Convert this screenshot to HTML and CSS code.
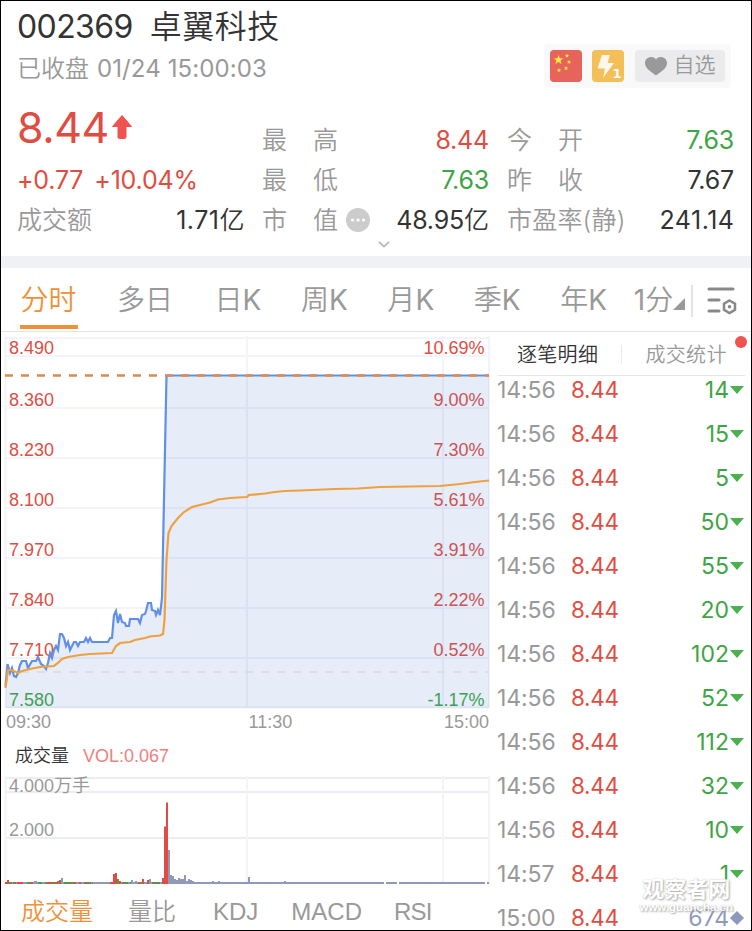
FILE: index.html
```html
<!DOCTYPE html>
<html lang="zh-CN">
<head>
    <meta charset="UTF-8">
    <meta name="viewport" content="width=device-width, initial-scale=1.0">
    <title>卓翼科技 002369</title>
    <link rel="stylesheet" href="styles.css">
</head>
<body>
    <div class="screen">
        <header class="quote">
            <div class="title"><span class="code">002369</span><span class="name">卓翼科技</span></div>
            <div class="status-row">
                <div class="status"><span>已收盘</span><span class="clock">01/24 15:00:03</span></div>
                <div class="actions">
                    <svg class="badge" viewBox="0 0 32 32">
                        <rect width="32" height="32" rx="4" fill="#e6645b"/>
                        <g fill="#fdec3c">
                            <path d="M8.500 5l1.400 3.200 3.300.2-2.600 2.100.9 3.400-3-1.900-3 1.900.9-3.400L4 8.400l3.300-.2z"/>
                            <path d="M17 3.500l.6 1.500 1.600.1-1.200 1 .4 1.500-1.400-.8-1.400.8.4-1.500-1.200-1 1.600-.1z"/>
                            <path d="M19 9.700l.6 1.500 1.600.1-1.200 1 .4 1.500-1.400-.8-1.400.8.4-1.500-1.200-1 1.600-.1z"/>
                            <path d="M16 16l.6 1.500 1.600.1-1.200 1 .4 1.500-1.400-.8-1.400.8.4-1.500-1.200-1 1.600-.1z"/>
                            <path d="M9 18l.6 1.500 1.600.1-1.200 1 .4 1.500-1.400-.8-1.400.8.4-1.500-1.200-1 1.600-.1z"/>
                        </g>
                    </svg>
                    <svg class="badge level-badge" viewBox="0 0 32 32">
                        <rect width="32" height="32" rx="4" fill="#f4bf59"/>
                        <path d="M10 5h8l-2.500 8H22L11 28l2-9.500H5.500z" fill="#fff8ea"/>
                        <text class="level" x="20.500" y="28">1</text>
                    </svg>
                    <div class="fav">
                        <svg width="22" height="19" viewBox="0 0 22 19"><path d="M11 18.500C8 16 0 12 0 6 0 0 8-2 11 2.500 14-2 22 0 22 6c0 6-8 10-11 12.500z" fill="#999"/></svg>
                        <span>自选</span>
                    </div>
                </div>
            </div>
            <div class="figures">
                <div class="col">
                    <div class="price"><span>8.44</span><svg width="20" height="24" viewBox="0 0 20 24"><path d="M10 .5L19.500 11.500H14V22q0 1.500-1.500 1.500h-5Q6 23.500 6 22V11.500H.5z" fill="#ef5350" stroke="#ef5350" stroke-linejoin="round"/></svg></div>
                    <div class="row change up"><span>+0.77</span><span>+10.04%</span></div>
                    <div class="row"><label>成交额</label><span class="loose">1.71<small>亿</small></span></div>
                </div>
                <div class="col">
                    <div class="row"><label>最<i></i>高</label><span class="up">8.44</span></div>
                    <div class="row"><label>最<i></i>低</label><span class="down">7.63</span></div>
                    <div class="row"><label>市<i></i>值<svg class="more" viewBox="0 0 24 24"><circle cx="12" cy="12" r="12" fill="#ccc"/><g fill="#fff"><circle cx="6.500" cy="12" r="1.600"/><circle cx="12" cy="12" r="1.600"/><circle cx="17.500" cy="12" r="1.600"/></g></svg></label><span>48.95<small>亿</small></span></div>
                </div>
                <div class="col">
                    <div class="row"><label>今<i></i>开</label><span class="down">7.63</span></div>
                    <div class="row"><label>昨<i></i>收</label><span>7.67</span></div>
                    <div class="row"><label class="pe">市盈率(静)</label><span class="loose">241.14</span></div>
                </div>
            </div>
            <svg class="expand" width="12" height="7" viewBox="0 0 12 7"><path d="M1 1l5 4.500L11 1" fill="none" stroke="#bbb" stroke-width="1.800"/></svg>
        </header>

        <nav class="periods">
            <a class="active">分时</a>
            <a class="days">多日</a>
            <a>日<em>K</em></a>
            <a>周<em>K</em></a>
            <a>月<em>K</em></a>
            <a>季<em>K</em></a>
            <a class="year">年<em>K</em></a>
            <a class="minute"><em>1</em>分<svg width="12" height="12" viewBox="0 0 12 12"><path d="M12 0v12H0z" fill="#999"/></svg></a>
            <div class="settings">
                <svg width="30" height="28" viewBox="0 0 30 28" fill="none" stroke="#888" stroke-width="3" stroke-linecap="round">
                    <path d="M2 2h24M2 13h10M2 24h10"/>
                    <path d="M22.500 14l5.500 3.200v6.200l-5.500 3.200-5.500-3.200v-6.200z" stroke-width="2.500" transform="translate(0 -.5)"/>
                    <circle cx="22.500" cy="19.800" r="1.800" fill="#888" stroke="none"/>
                </svg>
            </div>
        </nav>

        <main class="content">
            <section class="charts">
                <!-- intraday price, y grows from 8.49 down to 7.58 -->
                <svg class="price-chart" width="489" height="404" viewBox="1 332 489 404">
                    <g class="grid">
                        <path d="M5 338H489M5 356H489M5 408H489M5 458H489M5 508H489M5 558H489M5 608H489M5 658H489M5 707.500H489"/>
                        <path d="M5.500 336V708M247 336V708M443 336V708M489 336V708"/>
                    </g>
                    <g class="labels up">
                        <text x="9" y="354">8.490</text>
                        <text x="9" y="406">8.360</text>
                        <text x="9" y="456">8.230</text>
                        <text x="9" y="506">8.100</text>
                        <text x="9" y="556">7.970</text>
                        <text x="9" y="606">7.840</text>
                        <text x="9" y="656">7.710</text>
                        <text x="9" y="706" class="down">7.580</text>
                    </g>
                    <g class="labels end up">
                        <text x="484.500" y="354">10.69%</text>
                        <text x="484.500" y="406">9.00%</text>
                        <text x="484.500" y="456">7.30%</text>
                        <text x="484.500" y="506">5.61%</text>
                        <text x="484.500" y="556">3.91%</text>
                        <text x="484.500" y="606">2.22%</text>
                        <text x="484.500" y="656">0.52%</text>
                        <text x="484.500" y="706" class="down">-1.17%</text>
                    </g>
                    <path class="area" d="M5.500 686L7.500 664 10 673 12 668 14 676 16 677 18 673 20 665 22 661 26 661 28 668 32 661 36 661 38 657 41 664 44 666 46 669 48 663 50 653 52 658 54 650 56 646 58 650 60 634 62 634 64 638 66 646 68 642 70 650 74 642 76 642 78 646 80 642 84 642 86 638 88 642 90 638 92 642 108 642 110 638 112 638 114 615 116 611 118 623 120 614 122 622 125 623 126 626 129 626 130 619 138 619 140 623 142 615 145 614 146 611 148 603 151 603 152 610 155 611 156 615 158 610 160 615 162 598 166.500 375.500H489V708H5.500z"/>
                    <path class="prev-close" d="M21 672H489"/>
                    <path class="line" d="M5.500 686L7.500 664 10 673 12 668 14 676 16 677 18 673 20 665 22 661 26 661 28 668 32 661 36 661 38 657 41 664 44 666 46 669 48 663 50 653 52 658 54 650 56 646 58 650 60 634 62 634 64 638 66 646 68 642 70 650 74 642 76 642 78 646 80 642 84 642 86 638 88 642 90 638 92 642 108 642 110 638 112 638 114 615 116 611 118 623 120 614 122 622 125 623 126 626 129 626 130 619 138 619 140 623 142 615 145 614 146 611 148 603 151 603 152 610 155 611 156 615 158 610 160 615 162 598 166.500 375.500H489"/>
                    <path class="average" d="M5.500 688L8 670 10 670 14 671 18 673 22 671 30 669 40 667 54 666 58 663 62 659 68 657 80 655 90 654 112 653 116 646 120 643 130 642 135 640 145 638 150 636.500 160 635.500 163 634 164.500 620 166.500 560 168.500 533 171.500 526 178 518 184 512 192 507 200 505 210 502.500 218 499.500 230 498 247 497 249 495 265 493.500 275 492 285 491 300 490.500 335 489 358 488.500 380 487 440 486 460 484 475 482 489 480.500"/>
                    <path class="limit" d="M5 375.500H489"/>
                    <g class="labels axis">
                        <text x="6" y="728">09:30</text>
                        <text x="248.500" y="728">11:30</text>
                        <text x="444" y="728">15:00</text>
                    </g>
                </svg>
                <div class="vol-title"><span>成交量</span><span class="vol">VOL:0.067</span></div>
                <svg class="vol-chart" width="489" height="112" viewBox="1 776 489 112">
                    <g class="grid strong">
                        <path d="M5 778H489M5 792H489M5 838H489"/>
                    </g>
                    <g class="grid">
                        <path d="M5.500 776V884M247 776V884M443 776V884M489 776V884"/>
                    </g>
                    <g class="labels axis">
                        <text x="9" y="792">4.000万手</text>
                        <text x="9" y="836">2.000</text>
                    </g>
                    <path class="bars flat" d="M5 883H384M386 883H397M399 883H485M487 883H489M34 882H37M62 884V878M132 884V880M136 884V881M150 884V879M169 884V850M171 884V875M173 884V876M175 884V879M177 884V880M179 884V878M181 884V879M183 884V879M185 884V875M187 884V881M189 884V879M191 884V880M193 884V881M213 884V881M219 884V881M249 884V877M285 884V881"/>
                    <path class="bars rise" d="M5 883H9M13 883H15M17 883H23M30 883H33M47 883H52M54 883H57M69 883H71M74 883H76M79 883H81M86 883H88M90 883H91M110 883H114M122 883H124M138 883H140M154 883H156M8 884V880M60 884V880M114 884V874M116 884V873M120 884V881M143 884V879M148 884V880M163 884V878M165 884V826.500M167 884V802.500"/>
                    <path class="bars fall" d="M9 883H12M15 883H16M27 883H30M38 883H42M45 883H47M52 883H54M64 883H69M71 883H74M84 883H86M88 883H90M92 883H93M58 884V881M118 884V879M124 883H128M130 883H131M140 883H142M152 883H154M156 883H160"/>
                </svg>
                <nav class="indicators">
                    <a class="active">成交量</a>
                    <a>量比</a>
                    <a class="kdj">KDJ</a>
                    <a class="macd">MACD</a>
                    <a class="rsi">RSI</a>
                </nav>
            </section>

            <section class="ticks">
                <div class="tick-tabs">
                    <a class="active">逐笔明细</a>
                    <a>成交统计<i class="dot"></i></a>
                </div>
                <ul class="tick-list">
                    <li><time>14:56</time><b>8.44</b><span>14</span><i class="tri"></i></li>
                    <li><time>14:56</time><b>8.44</b><span>15</span><i class="tri"></i></li>
                    <li><time>14:56</time><b>8.44</b><span>5</span><i class="tri"></i></li>
                    <li><time>14:56</time><b>8.44</b><span>50</span><i class="tri"></i></li>
                    <li><time>14:56</time><b>8.44</b><span>55</span><i class="tri"></i></li>
                    <li><time>14:56</time><b>8.44</b><span>20</span><i class="tri"></i></li>
                    <li><time>14:56</time><b>8.44</b><span>102</span><i class="tri"></i></li>
                    <li><time>14:56</time><b>8.44</b><span>52</span><i class="tri"></i></li>
                    <li><time>14:56</time><b>8.44</b><span>112</span><i class="tri"></i></li>
                    <li><time>14:56</time><b>8.44</b><span>32</span><i class="tri"></i></li>
                    <li><time>14:56</time><b>8.44</b><span>10</span><i class="tri"></i></li>
                    <li><time>14:57</time><b>8.44</b><span>1</span><i class="tri"></i></li>
                    <li class="even"><time>15:00</time><b>8.44</b><span>674</span><i class="diamond"></i></li>
                </ul>
            </section>
        </main>
        <div class="watermark"><div class="wm-name">观察者网</div><div class="wm-url">www.guancha.cn</div></div>
    </div>
</body>
</html>
```
FILE: styles.css
```css
* {
    box-sizing: border-box;
}
body {
    margin: 0;
    font-family: Inter, "Noto Sans CJK SC", sans-serif;
    font-weight: 350;
    color: #333;
}
.screen {
    position: relative;
    width: 752px;
    height: 931px;
    border: 1px solid #000;
    background: #fff;
    overflow: hidden;
}
.up {
    color: #df4d42;
    fill: #df4d42;
}
.down {
    color: #3ea544;
    fill: #3ea544;
}
/* chinese stays a bit lighter than the digits */
.code, .clock, .price, .row span, .periods em {
    font-weight: 400;
    font-style: normal;
}
.row small {
    font-size: 25px;
    font-weight: 350;
    letter-spacing: 0;
}

/* header */
.quote {
    position: relative;
    height: 267px;
    padding: 1px 17px 0 16px;
    border-bottom: 12px solid #f0f1f4;
}
.title {
    display: flex;
    gap: 17px;
    height: 47px;
    line-height: 50px;
    font-size: 32px;
}
.code {
    letter-spacing: -0.6px;
}
.name {
    letter-spacing: 0.5px;
}
.status-row {
    display: flex;
    justify-content: space-between;
    height: 40px;
}
.status {
    display: flex;
    gap: 8px;
    line-height: 40px;
    font-size: 24px;
    color: #999;
}
.clock {
    letter-spacing: 0.1px;
}
.actions {
    display: flex;
    align-items: center;
    gap: 10px;
    height: 44px;
    margin: -5px 3px 0 0;
    padding: 0 6px;
    border-radius: 4px;
    background: #f9f9f9;
}
.badge {
    width: 32px;
    height: 32px;
}
.level-badge {
    margin-right: 1px;
}
.level {
    font: bold 13px "DejaVu Sans", sans-serif;
    fill: #fff;
}
.fav {
    display: flex;
    align-items: center;
    justify-content: center;
    gap: 7px;
    width: 90px;
    height: 32px;
    border-radius: 4px;
    background: #ebebed;
    font-size: 21px;
    line-height: 30px;
    color: #999;
}
.fav span {
    margin-top: -2px;
}
.figures {
    display: grid;
    grid-template-columns: 227px 227px 227px;
    justify-content: space-between;
    margin-top: 11px;
    padding-top: 20px;
}
.col {
    display: flex;
    flex-direction: column;
}
.row {
    display: flex;
    justify-content: space-between;
    height: 40px;
    line-height: 40px;
    font-size: 25px;
}
.row label {
    display: flex;
    align-items: center;
    margin-top: -1px;
    color: #999;
}
.row span {
    letter-spacing: -0.2px;
}
.row i {
    width: 26px;
}
.row .loose {
    letter-spacing: 0.5px;
    margin-right: -0.5px;
}
.pe {
    letter-spacing: 0.2px;
}
.change {
    justify-content: flex-start;
    gap: 11px;
}
.price {
    display: flex;
    align-items: center;
    gap: 3px;
    height: 40px;
    margin-top: -13px;
    margin-bottom: 13px;
    font-size: 43px;
    letter-spacing: -0.4px;
    color: #df4d42;
}
.more {
    width: 24px;
    height: 24px;
    margin-left: 8px;
}
.expand {
    position: absolute;
    left: 377px;
    top: 240px;
}

/* period tabs */
.periods {
    display: flex;
    height: 64px;
    padding-left: 19px;
    border-bottom: 1px solid #e4e4e4;
    font-size: 28px;
    line-height: 64px;
    color: #999;
}
.periods a {
    display: block;
    width: 58px;
    height: 61px;
    margin-right: 28.4px;
    text-align: center;
    white-space: nowrap;
}
.periods .active {
    margin-right: 38px;
    border-bottom: 4px solid #f0913a;
    color: #f0913a;
    text-indent: -1px;
}
.periods .days {
    margin-right: 35px;
}
.periods .year {
    margin-right: 18px;
}
.periods .minute {
    width: 58px;
    margin-right: 2px;
}
.settings {
    display: flex;
    align-items: center;
    height: 32px;
    margin-top: 17px;
    padding-left: 14px;
    border-left: 2px solid #e4e4e4;
}

/* charts */
.content {
    display: flex;
}
.charts {
    width: 489px;
}
.charts svg {
    display: block;
}
.grid {
    fill: none;
    stroke: #f3f3f9;
    stroke-width: 2;
}
.strong {
    stroke: #ececf3;
}
.labels {
    font: 18px "Liberation Sans", "Noto Sans CJK SC", sans-serif;
}
.end {
    text-anchor: end;
}
.axis {
    fill: #999;
}
.area {
    fill: rgba(80, 125, 208, 0.14);
}
.line {
    fill: none;
    stroke: #628fe6;
    stroke-width: 2.2;
}
.average {
    fill: none;
    stroke: #f0a040;
    stroke-width: 2.2;
}
.limit {
    fill: none;
    stroke: #dc8c4e;
    stroke-width: 2.4;
    stroke-dasharray: 8 8;
}
.prev-close {
    fill: none;
    stroke: #dcdfe2;
    stroke-width: 2;
    stroke-dasharray: 8 8;
}
.vol-title {
    display: flex;
    gap: 14px;
    height: 40px;
    padding-left: 14px;
    line-height: 40px;
    font-size: 18px;
}
.vol {
    font-family: "Liberation Sans", sans-serif;
    color: #f08080;
}
.bars {
    fill: none;
    stroke-width: 2;
}
.flat {
    stroke: #8f9aba;
}
.rise {
    stroke: #e24b43;
}
.fall {
    stroke: #3ea544;
}
.indicators {
    display: flex;
    height: 43px;
    padding-left: 20px;
    line-height: 48px;
    font-family: "Liberation Sans", "Noto Sans CJK SC", sans-serif;
    font-size: 24px;
    color: #999;
}
.indicators a {
    margin-right: 35px;
}
.indicators .active {
    color: #f0913a;
}
.indicators .kdj {
    margin-left: 2px;
    margin-right: 33px;
}
.indicators .macd {
    margin-right: 32px;
}
.indicators .rsi {
    margin-right: 0;
    letter-spacing: -0.8px;
}

/* trades list */
.ticks {
    width: 261px;
    padding: 0 6px 0 8px;
}
.tick-tabs {
    display: flex;
    height: 44px;
    border-bottom: 1px solid #e4e4e4;
    font-size: 20px;
    line-height: 46px;
    letter-spacing: 0.3px;
    color: #999;
}
.tick-tabs a {
    position: relative;
    width: 124px;
    padding-left: 19px;
    white-space: nowrap;
}
.tick-tabs a + a {
    padding-left: 24px;
    background: linear-gradient(#e9e9e9, #e9e9e9) no-repeat 0 13px / 1px 19px;
}
.tick-tabs .active {
    color: #333;
}
.dot {
    position: absolute;
    right: -2px;
    top: 4px;
    width: 12px;
    height: 12px;
    border-radius: 50%;
    background: #ef5350;
}
.tick-list {
    margin: -8px 0 0;
    padding: 0;
    list-style: none;
}
.tick-list li {
    display: flex;
    align-items: center;
    height: 44px;
    line-height: 22px;
    font-size: 23px;
    font-weight: 400;
}
.tick-list time {
    width: 74px;
    margin-left: -1px;
    letter-spacing: -0.1px;
    color: #999;
}
.tick-list b {
    flex: 1;
    font-weight: 400;
    font-size: 22.5px;
    letter-spacing: -0.3px;
    color: #df4d42;
}
.tick-list span {
    color: #3ea544;
}
.tri {
    margin: 0 1px 0 1px;
    border: 7.5px solid transparent;
    border-top: 8px solid #4caf50;
    border-bottom: 0;
}
.even span {
    color: #8f9aba;
}
.diamond {
    width: 10px;
    height: 10px;
    margin: 0 3px;
    background: #8f9aba;
    transform: rotate(45deg);
}
.tick-list .even span {
    color: #8f9aba;
}

.watermark {
    position: absolute;
    right: 18px;
    bottom: 17px;
    text-align: center;
    color: #fff;
    text-shadow: 1px 1px 2px #999, 0 0 1px #bbb;
    opacity: 0.85;
}
.wm-name {
    font-size: 22px;
    line-height: 24px;
    font-weight: 700;
}
.wm-url {
    font: bold 11.5px/12px "Liberation Sans", sans-serif;
}
```
